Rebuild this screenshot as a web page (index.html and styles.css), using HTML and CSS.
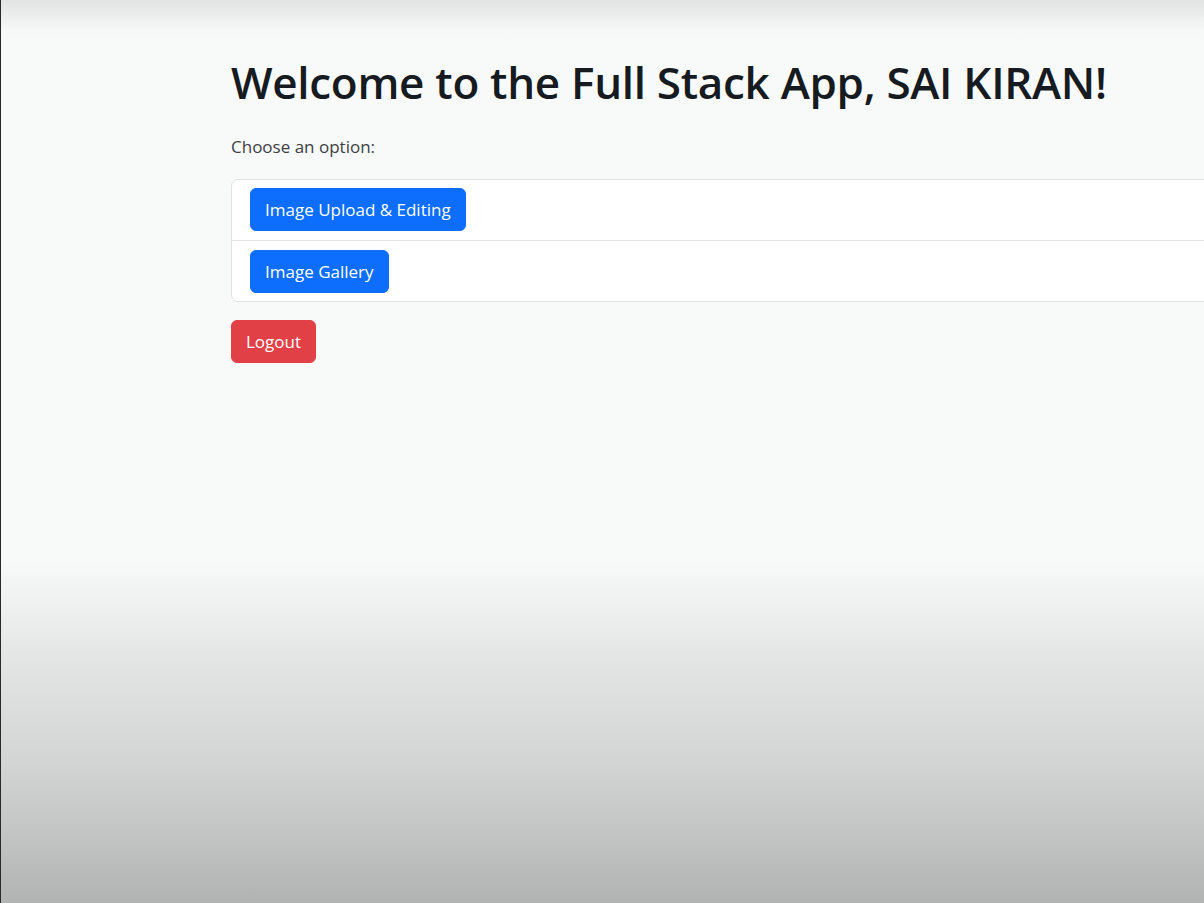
FILE: index.html
```html
<!DOCTYPE html>
<html lang="en">
<head>
<meta charset="utf-8">
<title>Full Stack App</title>
<link rel="stylesheet" href="styles.css">
</head>
<body>
<div class="edge"></div>
<main class="container">
  <h1 class="title">Welcome to the Full Stack App, SAI KIRAN!</h1>
  <p class="lead">Choose an option:</p>
  <ul class="list">
    <li class="item"><button class="btn btn-primary">Image Upload &amp; Editing</button></li>
    <li class="item"><button class="btn btn-primary">Image Gallery</button></li>
  </ul>
  <button class="btn btn-danger">Logout</button>
</main>
</body>
</html>
```

FILE: styles.css
```css
html, body {
  margin: 0;
  padding: 0;
  height: 100%;
  overflow: hidden;
}
body {
  font-family: "Open Sans", "Noto Sans", sans-serif;
  color: #212529;
  background: linear-gradient(to bottom,
    #e2e3e3 0px,
    #f6f7f7 30px,
    #f8f9f9 45px,
    #f8f9f9 560px,
    #e2e4e3 667px,
    #d2d4d3 767px,
    #c3c5c4 833px,
    #b1b3b2 903px);
  display: flex;
}
.edge {
  width: 1px;
  background: #2a2a2a;
  flex: none;
}
.container {
  flex: 1;
  min-width: 0;
  overflow: hidden;
  padding: 56px 0 0 230px;
}
.title {
  margin: 0 0 25px;
  font-size: 44px;
  font-weight: 600;
  line-height: 1.2;
  letter-spacing: -0.3px;
  color: #161b21;
  white-space: nowrap;
}
.lead {
  margin: 0 0 20px;
  font-size: 17px;
  line-height: 1.5;
  color: #3c4044;
}
.list {
  list-style: none;
  margin: 0 0 18px;
  padding: 0;
  width: calc(100% + 40px);
  background: #fff;
  border: 1px solid #dfe2e4;
  border-radius: 7px;
}
.item {
  padding: 8px 18px 9px;
}
.item + .item {
  padding: 9px 18px 8px;
  border-top: 1px solid #e3e5e7;
}
.btn {
  font-family: inherit;
  font-size: 17px;
  line-height: 27px;
  padding: 7px 14px;
  border: 1px solid transparent;
  border-radius: 6px;
  color: #fff;
  cursor: pointer;
  display: inline-block;
}
.btn-primary {
  background: #0d6efd;
  border-color: #0d6efd;
}
.btn-danger {
  background: #e04046;
  border-color: #e04046;
}
```
